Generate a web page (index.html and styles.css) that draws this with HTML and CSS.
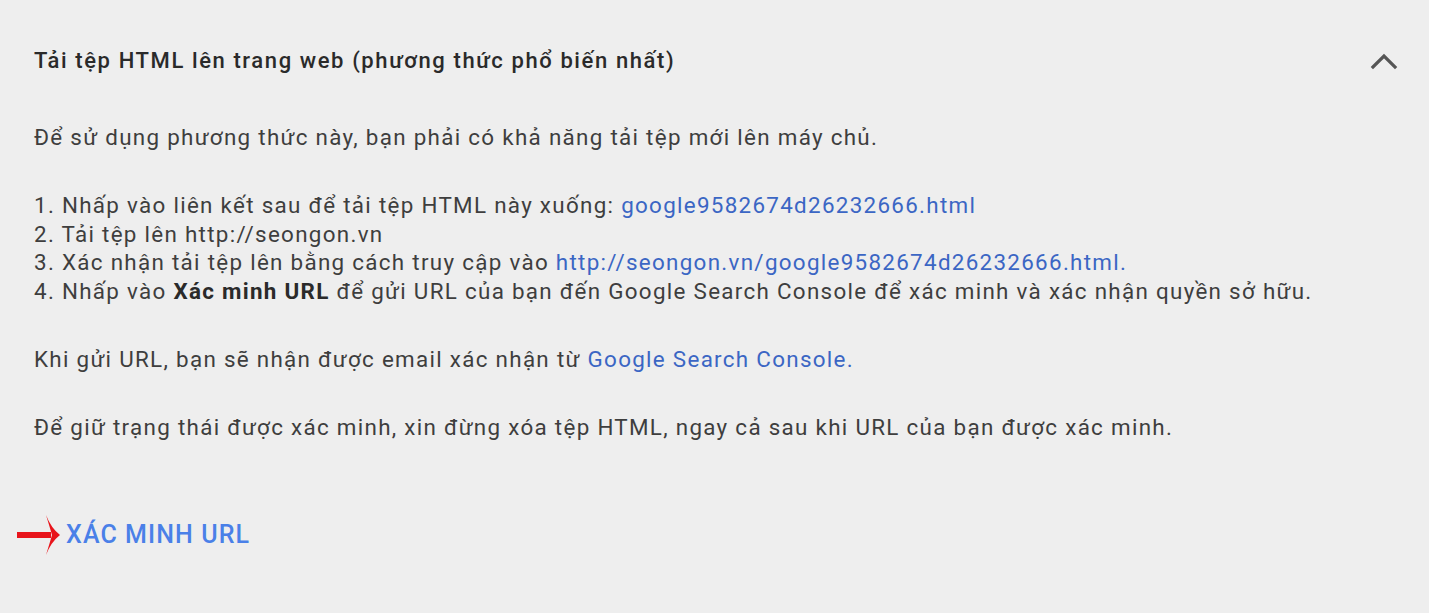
FILE: index.html
```html
<!DOCTYPE html>
<html lang="vi">
<head>
<meta charset="utf-8">
<title>Tải tệp HTML</title>
<link rel="stylesheet" href="styles.css">
</head>
<body>
<section class="panel">
  <header class="panel-head">
    <h2 class="panel-title">Tải tệp HTML lên trang web (phương thức phổ biến nhất)</h2>
    <svg class="chevron" width="28" height="18" viewBox="0 0 28 18" aria-hidden="true">
      <path d="M3 15 L14 4 L25 15" fill="none" stroke="#555" stroke-width="3.2" stroke-linecap="square"/>
    </svg>
  </header>
  <div class="panel-body">
    <p>Để sử dụng phương thức này, bạn phải có khả năng tải tệp mới lên máy chủ.</p>
    <p>1. Nhấp vào liên kết sau để tải tệp HTML này xuống: <a class="link" href="#">google9582674d26232666.html</a><br>
    2. Tải tệp lên http://seongon.vn<br>
    3. Xác nhận tải tệp lên bằng cách truy cập vào <a class="link" href="#">http://seongon.vn/google9582674d26232666.html.</a><br>
    4. Nhấp vào <b>Xác minh URL</b> để gửi URL của bạn đến Google Search Console để xác minh và xác nhận quyền sở hữu.</p>
    <p>Khi gửi URL, bạn sẽ nhận được email xác nhận từ <a class="link" href="#">Google Search Console.</a></p>
    <p>Để giữ trạng thái được xác minh, xin đừng xóa tệp HTML, ngay cả sau khi URL của bạn được xác minh.</p>
  </div>
  <footer class="panel-foot">
    <svg class="arrow" width="44" height="42" viewBox="0 0 44 42" aria-hidden="true">
      <path d="M0 18 H34 V24 H0 Z" fill="#e8141b"/>
      <path d="M29 1 Q34 14 43 21 Q34 28 29 41 Q33 28 35 21 Q33 14 29 1 Z" fill="#e8141b"/>
    </svg>
    <a class="verify" href="#">XÁC MINH URL</a>
  </footer>
</section>
</body>
</html>
```
FILE: styles.css
```css
html, body {
  margin: 0;
  padding: 0;
  background: #eeeeee;
}
body {
  font-family: Roboto, "Noto Sans", sans-serif;
  color: #3e3e3e;
  width: 1429px;
  height: 613px;
  overflow: hidden;
}
.panel {
  padding: 0 0 0 34px;
}
.panel-head {
  display: flex;
  align-items: center;
  justify-content: space-between;
  padding: 44px 31px 0 0;
  height: 34px;
}
.panel-title {
  margin: 0;
  font-size: 22px;
  font-weight: 500;
  letter-spacing: 1.6px;
  color: #2a2a2a;
  line-height: 34px;
}
.chevron {
  display: block;
}
.panel-body {
  padding-top: 45px;
  font-size: 22.4px;
  letter-spacing: 1.3px;
  line-height: 28.5px;
}
.panel-body p {
  margin: 0 0 39.5px 0;
}
.panel-body b {
  font-weight: 700;
  color: #2a2a2a;
}
.link {
  color: #3b66c4;
  text-decoration: none;
}
.panel-foot {
  display: flex;
  align-items: center;
  margin-left: -17px;
  padding-top: 33px;
  gap: 5px;
}
.arrow {
  display: block;
}
.verify {
  color: #4a80e8;
  font-size: 25px;
  font-weight: 500;
  letter-spacing: 1.1px;
  text-decoration: none;
}
```
